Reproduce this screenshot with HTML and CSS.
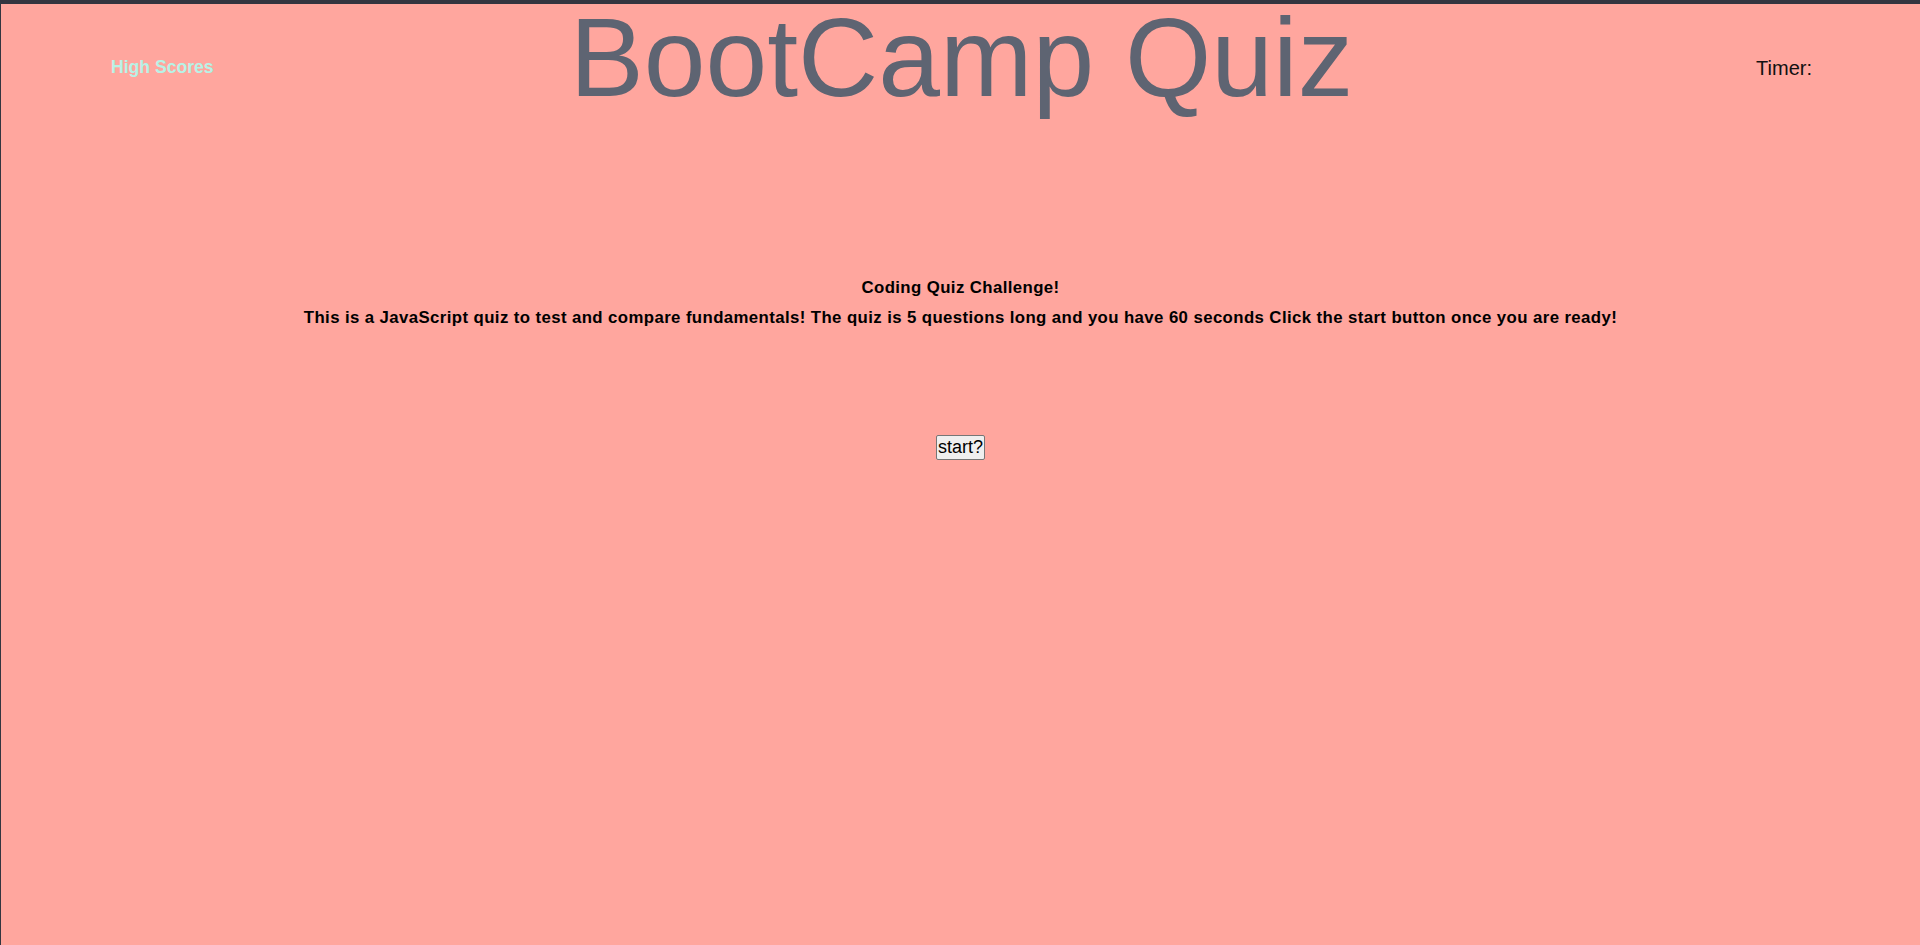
FILE: index.html
```html
<!DOCTYPE html>
<html lang="en">
<head>
<meta charset="utf-8">
<title>BootCamp Quiz</title>
<link rel="stylesheet" href="styles.css">
</head>
<body>
<header class="top">
  <a class="high-scores" href="#">High Scores</a>
  <h1 class="title">BootCamp Quiz</h1>
  <div class="timer">Timer: <span class="time"></span></div>
</header>
<main class="intro">
  <h2 class="intro-title">Coding Quiz Challenge!</h2>
  <p class="intro-text">This is a JavaScript quiz to test and compare fundamentals! The quiz is 5 questions long and you have 60 seconds Click the start button once you are ready!</p>
  <button class="start" type="button">start?</button>
</main>
</body>
</html>
```
FILE: styles.css
```css
* { box-sizing: border-box; }

html {
  background: #ffa69e;
}

body {
  margin: 0;
  min-height: 100vh;
  background: #ffa69e;
  border-top: 4px solid #333540;
  border-left: 1px solid #333540;
  font-family: "Liberation Sans", Arial, sans-serif;
  color: #000;
}

.top {
  display: grid;
  grid-template-columns: 1fr auto 1fr;
  align-items: start;
  padding: 0 108px 0 110px;
}

.high-scores {
  justify-self: start;
  margin-top: 53px;
  font-size: 17.6px;
  font-weight: bold;
  color: #b8f2e6;
  text-decoration: none;
}

.title {
  margin: 0;
  font-size: 111px;
  line-height: 108px;
  font-weight: normal;
  color: #5e6472;
  white-space: nowrap;
}

.timer {
  justify-self: end;
  margin-top: 53px;
  font-size: 20px;
  color: #111;
}

.intro {
  display: flex;
  flex-direction: column;
  align-items: center;
  padding-top: 166px;
  text-align: center;
}

.intro-title {
  margin: 0 0 10px;
  font-size: 16.8px;
  font-weight: bold;
  letter-spacing: 0.4px;
}

.intro-text {
  margin: 0 0 107px;
  font-size: 16.8px;
  font-weight: bold;
  letter-spacing: 0.4px;
}

.start {
  font-family: "Liberation Sans", Arial, sans-serif;
  font-size: 18px;
  line-height: normal;
  padding: 1px 1px;
  background: #efefef;
  color: #000;
  border: 1px solid #767676;
  border-radius: 2px;
}
```
